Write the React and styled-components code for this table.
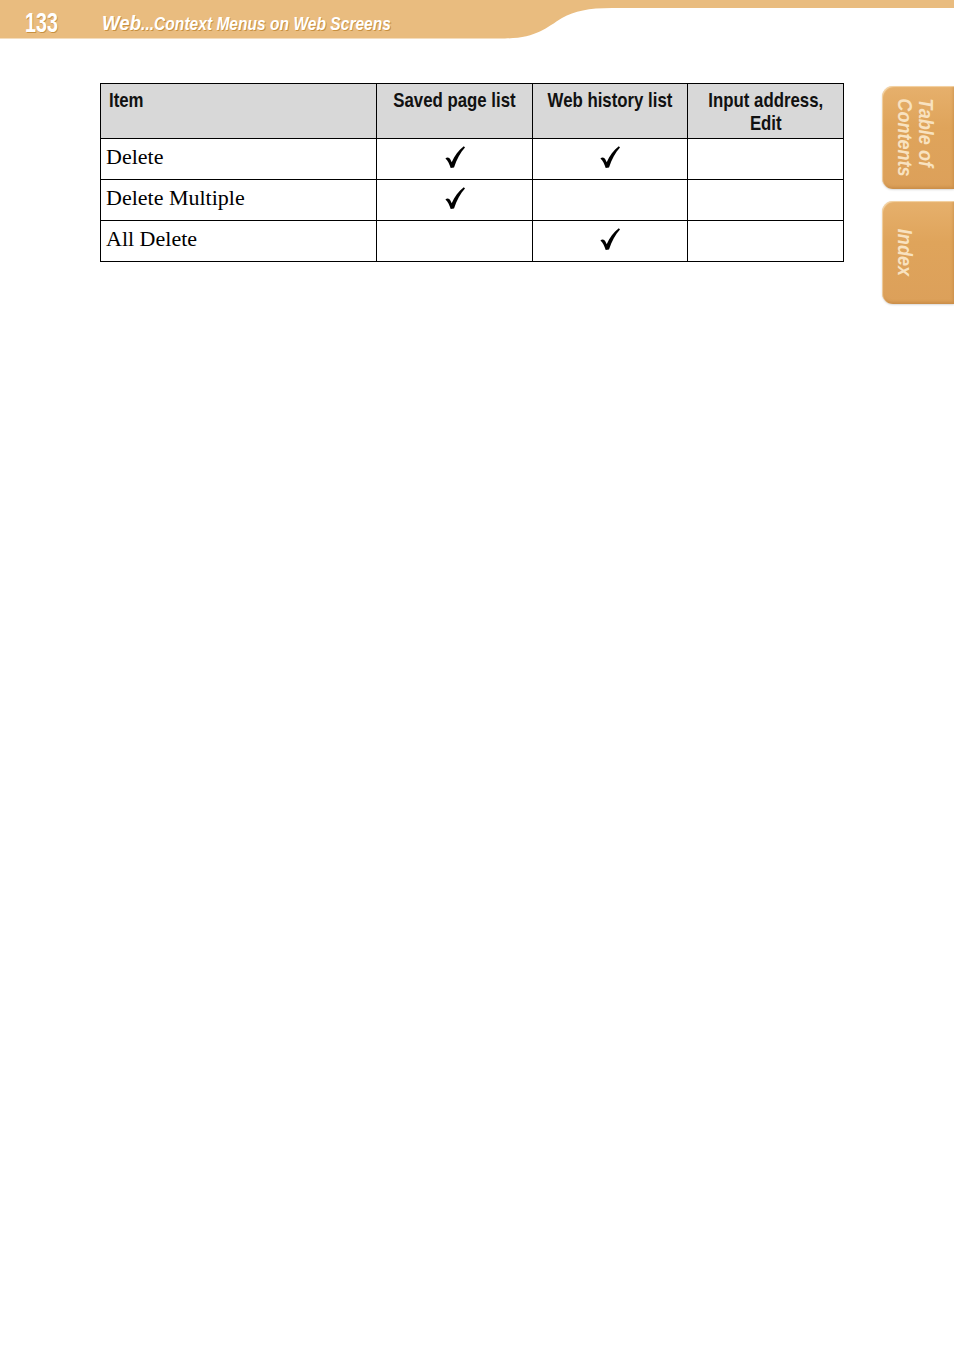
import React from 'react';
import styled, {createGlobalStyle} from "styled-components";

const GlobalStyle = createGlobalStyle`
    html, body {
        margin: 0;
        padding: 0;
        background: #fff;
    }
    body {
        width: 954px;
        min-height: 1370px;
        font-family: "Liberation Serif", "Times New Roman", serif;
    }
`;

// no condensed face installed, so Liberation Sans gets squeezed with scaleX
const sans = `"Liberation Sans", Arial, sans-serif`;

const HeaderBar = styled.header`
    position: relative;
    height: 40px;
    display: flex;
    align-items: flex-start;
    color: #fff;
    font-family: ${sans};
    font-weight: bold;
    text-shadow: 1px 1px 0 #c8903f;
`;

const HeaderShape = styled.svg`
    position: absolute;
    left: 0;
    top: 0;
`;

const PageNumber = styled.span`
    position: relative;
    display: inline-block;
    margin: 10px 0 0 25px;
    font-size: 27px;
    line-height: 27px;
    white-space: nowrap;
    transform: scaleX(0.73);
    transform-origin: left top;
`;

const Title = styled.h1`
    position: relative;
    margin: 12px 0 0 32px;
    font-size: 17.5px;
    font-style: italic;
    font-weight: bold;
    line-height: 21px;
    white-space: nowrap;
    transform: scaleX(0.89);
    transform-origin: left top;
`;

const Section = styled.span`
    font-size: 21px;
`;

const Body = styled.div`
    display: flex;
    align-items: flex-start;
    padding-top: 43px;
`;

const Content = styled.main`
    padding-left: 100px;
    width: 743px;
`;

const Table = styled.table`
    width: 743px;
    border-collapse: collapse;
    table-layout: fixed;
`;

const HeadCell = styled.th`
    height: 55px;
    padding: 4px 0 0;
    box-sizing: border-box;
    background: #d8d8d8;
    border: 1px solid #000;
    vertical-align: top;
`;

const HeadLabel = styled.div`
    display: flex;
    justify-content: ${p => p.$left ? "flex-start" : "center"};
    padding-left: ${p => p.$left ? "8px" : "0"};
`;

const HeadText = styled.span`
    display: inline-block;
    white-space: pre;
    font-family: ${sans};
    font-weight: bold;
    font-size: 21px;
    line-height: 23px;
    text-align: center;
    color: #111;
    transform: scaleX(0.8);
    transform-origin: ${p => p.$left ? "left" : "center"} top;
`;

const Cell = styled.td`
    height: 41px;
    padding: 6px 5px 0;
    box-sizing: border-box;
    border: 1px solid #000;
    font-size: 22px;
    line-height: 24px;
    color: #000;
    vertical-align: top;
`;

const CheckMark = styled.svg`
    display: block;
    margin: 1px auto 0;
`;

const SideNav = styled.nav`
    margin-left: auto;
    margin-top: 3px;
    display: flex;
    flex-direction: column;
    gap: 12px;
`;

const Tab = styled.a`
    width: 72px;
    height: 103px;
    box-sizing: border-box;
    padding-left: 13px;
    display: flex;
    align-items: center;
    border-radius: 11px 0 0 11px;
    background: linear-gradient(180deg, #e6b06c 0%, #dfa45b 40%, #dca05a 100%);
    box-shadow: inset 1px 1px 1px rgba(255,240,210,0.6), inset -1px -2px 3px rgba(170,110,40,0.35), 0 1px 2px rgba(0,0,0,0.15);
    text-decoration: none;
`;

const TabLabel = styled.span`
    writing-mode: vertical-rl;
    font-family: ${sans};
    font-weight: bold;
    font-style: italic;
    font-size: 21px;
    line-height: 21px;
    color: #f8e2c0;
    white-space: nowrap;
    transform: scaleY(0.86);
`;

const columns = [
    {label: "Item", left: true},
    {label: "Saved page list"},
    {label: "Web history list"},
    {label: "Input address,\nEdit"},
];

const rows = [
    {item: "Delete", marks: [true, true, false]},
    {item: "Delete Multiple", marks: [true, false, false]},
    {item: "All Delete", marks: [false, true, false]},
];

const Check = () => (
    <CheckMark width="20" height="22" viewBox="0 0 20 22">
        <path d="M0.4 12.6 C2.2 10.6 4.4 11.4 5.4 13.6 L6.7 16.2 C9.6 9.6 13.6 4.4 18.8 0.2 L20 1.6 C15.4 6.6 11.8 13.2 9 21.5 L5.7 22 C4.5 18.2 2.8 14.8 0.4 12.6 Z" fill="#000"/>
    </CheckMark>
);

const App = () => {
    return (
        <>
            <GlobalStyle/>
            <HeaderBar>
                <HeaderShape width="954" height="40" viewBox="0 0 954 40">
                    <path d="M0 0 H954 V8 H612 C588 8 575 11 562 18 C546 28 536 38 505 38.5 H0 Z" fill="#e9bc7f"/>
                </HeaderShape>
                <PageNumber>133</PageNumber>
                <Title><Section>Web</Section>...Context Menus on Web Screens</Title>
            </HeaderBar>
            <Body>
                <Content>
                    <Table>
                        <colgroup>
                            <col style={{width: 276}}/>
                            <col style={{width: 156}}/>
                            <col style={{width: 155}}/>
                            <col style={{width: 156}}/>
                        </colgroup>
                        <thead>
                            <tr>
                                {columns.map(c => (
                                    <HeadCell key={c.label}>
                                        <HeadLabel $left={c.left}>
                                            <HeadText $left={c.left}>{c.label}</HeadText>
                                        </HeadLabel>
                                    </HeadCell>
                                ))}
                            </tr>
                        </thead>
                        <tbody>
                            {rows.map(r => (
                                <tr key={r.item}>
                                    <Cell>{r.item}</Cell>
                                    {r.marks.map((on, i) => (
                                        <Cell key={i}>{on ? <Check/> : null}</Cell>
                                    ))}
                                </tr>
                            ))}
                        </tbody>
                    </Table>
                </Content>
                <SideNav>
                    <Tab href="#toc"><TabLabel>Table of<br/>Contents</TabLabel></Tab>
                    <Tab href="#index"><TabLabel>Index</TabLabel></Tab>
                </SideNav>
            </Body>
        </>
    );
};

export default App;
